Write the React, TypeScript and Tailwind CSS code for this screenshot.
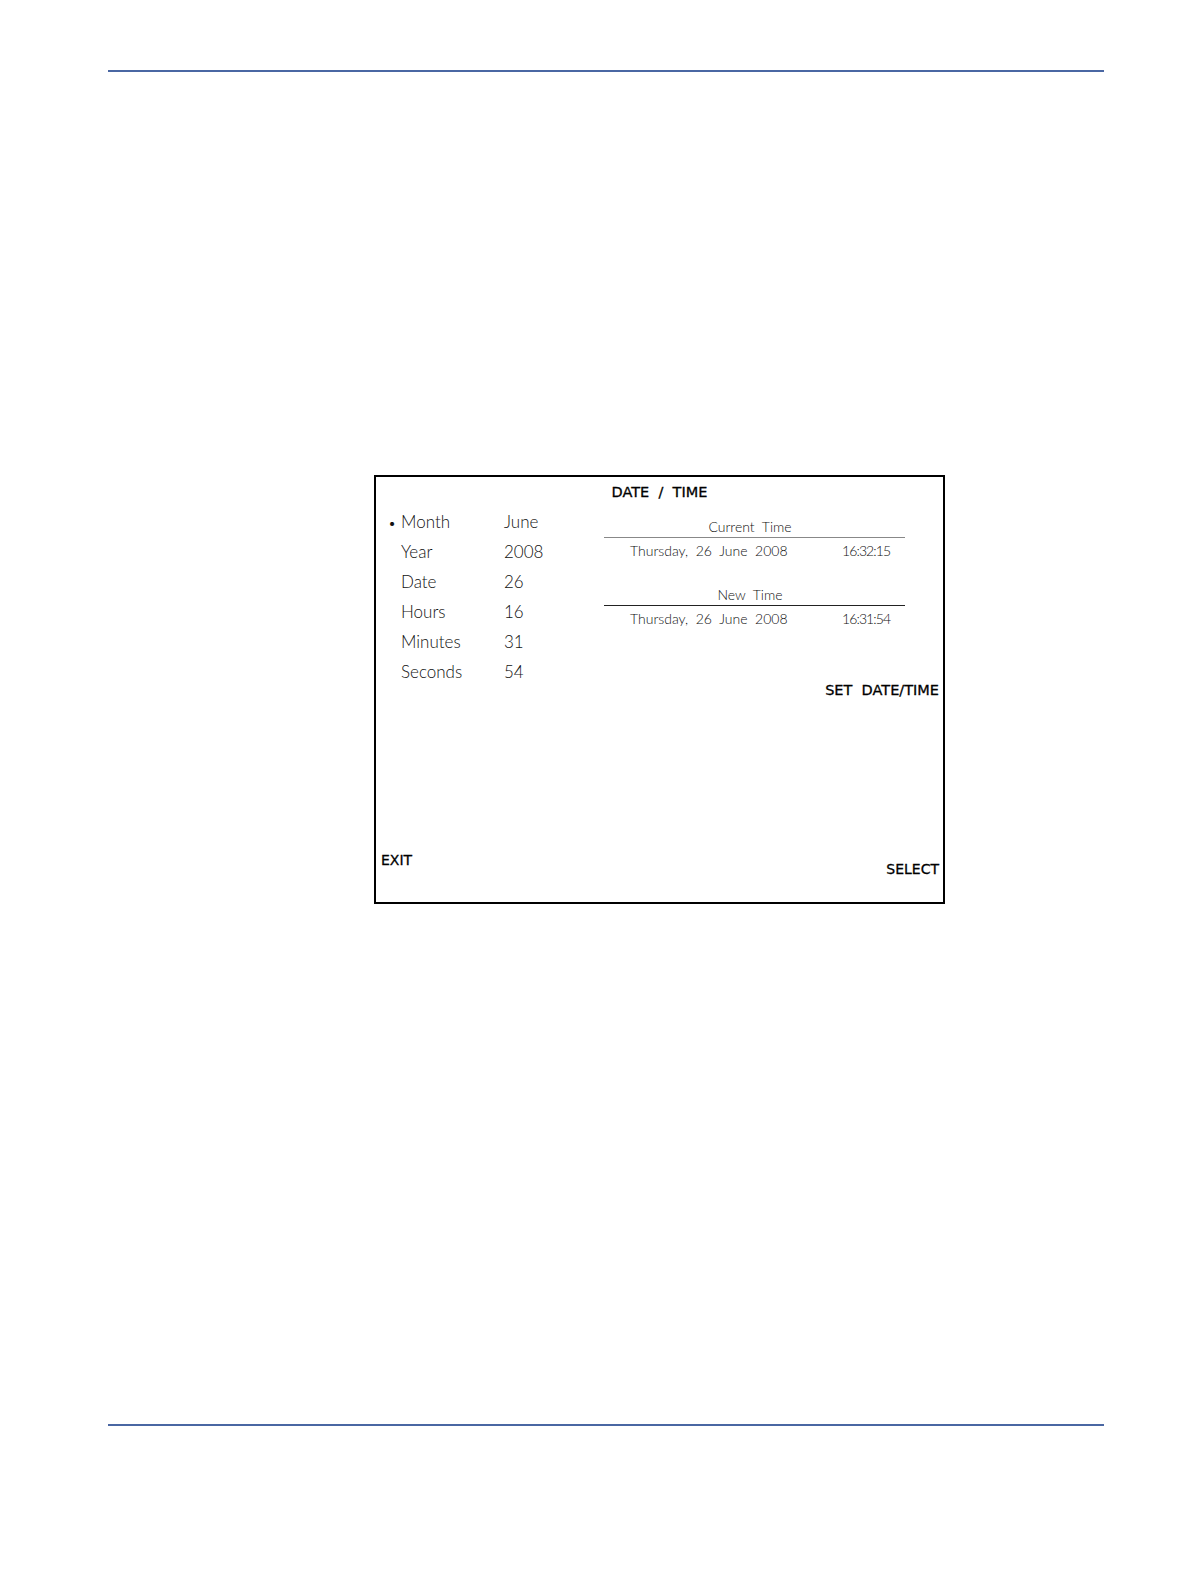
const fields = [
  { label: "Month", value: "June", active: true },
  { label: "Year", value: "2008" },
  { label: "Date", value: "26" },
  { label: "Hours", value: "16" },
  { label: "Minutes", value: "31" },
  { label: "Seconds", value: "54" },
];

const thin = { fontFamily: 'Lato, "Liberation Sans", sans-serif' };
const heavy = { fontFamily: '"DejaVu Sans", Verdana, sans-serif' };

function TimeBlock({ title, time, dark }: { title: string; time: string; dark?: boolean }) {
  return (
    <div>
      <div className={`w-[301px] pr-[9px] pb-[2px] text-center text-[14px] leading-[16px] font-light text-[#111] whitespace-pre border-b ${dark ? "border-[#222]" : "border-[#888]"}`}>
        {title}
      </div>
      <div className="mt-[5px] flex w-[301px] pl-[26px] text-[14px] leading-[16px] font-light text-[#111]">
        <span className="w-[212px] whitespace-pre">Thursday,  26  June  2008</span>
        <span className="tracking-[-0.9px]">{time}</span>
      </div>
    </div>
  );
}

export default function App() {
  return (
    <div className="min-h-screen w-full bg-white" style={thin}>
      <div className="pt-[70px]">
        <div className="ml-[108px] h-[2px] w-[996px] bg-[#4a67a3]" />
      </div>

      <div className="ml-[374px] mt-[403px] flex h-[429px] w-[571px] flex-col border-2 border-black">
        <div className="pt-[5px] text-center text-[14.5px] leading-[20px] text-black whitespace-pre [-webkit-text-stroke:0.3px_black]" style={heavy}>
          DATE  /  TIME
        </div>

        <div className="mt-[5px] flex">
          <div className="w-[228px] pl-[12px]">
            {fields.map((f) => (
              <div key={f.label} className="flex h-[30px] items-center text-[17px] font-light text-[#111]">
                <span className="w-[13px] text-[14px]">{f.active ? "•" : ""}</span>
                <span className="w-[103px]">{f.label}</span>
                <span>{f.value}</span>
              </div>
            ))}
          </div>

          <div className="flex-1 pt-[12px]">
            <TimeBlock title="Current  Time" time="16:32:15" />
            <div className="mt-[28px]">
              <TimeBlock title="New  Time" time="16:31:54" dark />
            </div>
            <div className="mt-[53px] pr-[4px] text-right text-[14.5px] leading-[20px] text-black whitespace-pre [-webkit-text-stroke:0.3px_black]" style={heavy}>
              SET  DATE/TIME
            </div>
          </div>
        </div>

        <div className="mt-auto flex items-end justify-between pl-[5px] pr-[4px] pb-[23px] text-[14px] leading-[20px] text-black [-webkit-text-stroke:0.3px_black]" style={heavy}>
          <span className="mb-[9px]">EXIT</span>
          <span>SELECT</span>
        </div>
      </div>

      <div className="ml-[108px] mt-[520px] h-[2px] w-[996px] bg-[#4a67a3]" />
    </div>
  );
}
